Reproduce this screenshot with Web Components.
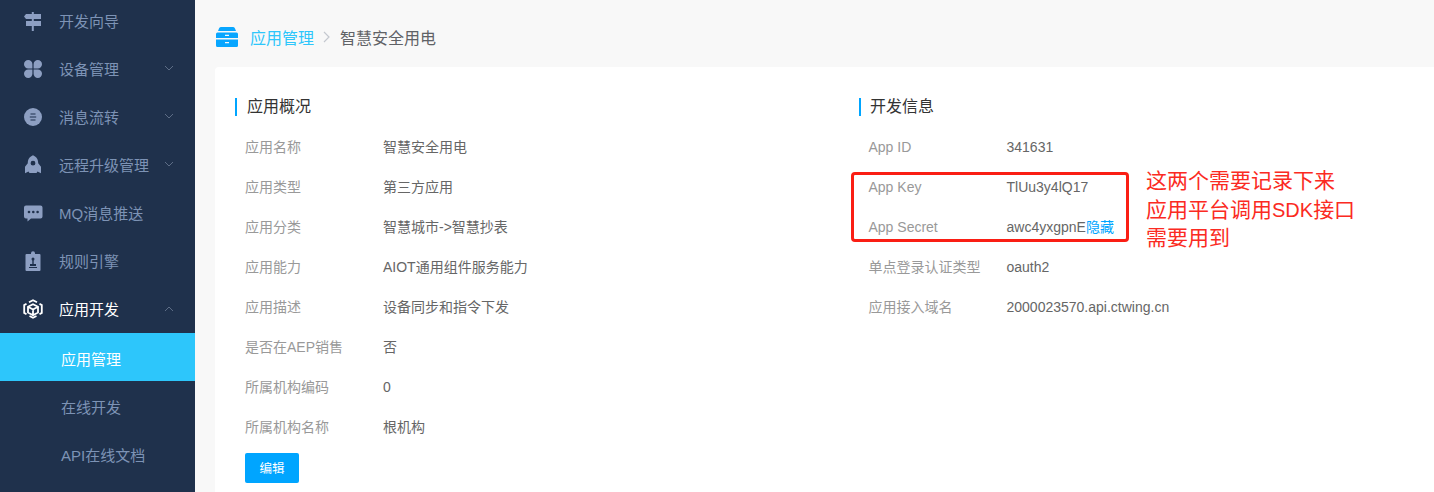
<!DOCTYPE html>
<html lang="zh">
<head>
<meta charset="utf-8">
<title>应用管理</title>
<style>
  html, body { margin: 0; height: 492px; overflow: hidden; }
  body { font-family: "Liberation Sans", "Noto Sans CJK SC", sans-serif; }
</style>
</head>
<body>
<app-shell>
  <side-nav slot="nav">
    <nav-item label="开发向导"><svg slot="icon" viewBox="0 0 20 20"><path d="M8.800 1h2v2h7.200v5h-7.200v2h7.200v5h-7.200v5h-2v-5H3v-5h5.800V8H3L1 5.500 3 3h5.800z" fill="#8d9fc2"/></svg></nav-item>
    <nav-item label="设备管理" chevron="down"><svg slot="icon" viewBox="0 0 20 20" fill="#8d9fc2"><path d="M5.200 1a4.200 4.200 0 0 1 4.200 4.200v4.200H5.200a4.200 4.200 0 0 1 0-8.400zM14.800 1a4.200 4.200 0 0 1 0 8.400h-4.200V5.200A4.200 4.200 0 0 1 14.800 1zM5.200 10.600h4.200v4.200a4.200 4.200 0 1 1-4.200-4.200zM10.600 10.600h4.200a4.200 4.200 0 1 1-4.200 4.200z"/></svg></nav-item>
    <nav-item label="消息流转" chevron="down"><svg slot="icon" viewBox="0 0 20 20"><circle cx="10" cy="10" r="9" fill="#8d9fc2"/><path d="M7.500 7h5M6.800 10h6.400M7.500 13h5" stroke="#1f314c" stroke-width="1.100"/></svg></nav-item>
    <nav-item label="远程升级管理" chevron="down"><svg slot="icon" viewBox="0 0 20 20" fill-rule="evenodd"><path d="M10 .3c3.800 1.600 5.200 4.500 5.200 8l2.800 3.500v6.500l-3.500-1.800-1 1.500H6.500l-1-1.500L2 18.300v-6.500l2.800-3.500c0-3.500 1.400-6.400 5.200-8zM10 5.800a2.400 2.400 0 1 0 0 4.800 2.400 2.400 0 0 0 0-4.800z" fill="#8d9fc2"/></svg></nav-item>
    <nav-item label="MQ消息推送"><svg slot="icon" viewBox="0 0 20 20"><path d="M3 2.500h14.500a2 2 0 0 1 2 2v9a2 2 0 0 1-2 2H8l-3.500 3v-3H3a2 2 0 0 1-2-2v-9a2 2 0 0 1 2-2z" fill="#8d9fc2"/><circle cx="6" cy="9" r="1.300" fill="#1f314c"/><circle cx="10.300" cy="9" r="1.300" fill="#1f314c"/><circle cx="14.600" cy="9" r="1.300" fill="#1f314c"/></svg></nav-item>
    <nav-item label="规则引擎"><svg slot="icon" viewBox="0 0 20 20"><path d="M8 3V2.200a2 2 0 0 1 4 0V3h4.500a1 1 0 0 1 1 1v15a1 1 0 0 1-1 1h-13a1 1 0 0 1-1-1V4a1 1 0 0 1 1-1z" fill="#8d9fc2"/><circle cx="10" cy="8" r="1.500" fill="#1f314c"/><path d="M9.300 9h1.400v4h2.300v2H7v-2h2.300z" fill="#1f314c"/><path d="M6 16.500h8" stroke="#1f314c"/></svg></nav-item>
    <nav-item label="应用开发" chevron="up" active><svg slot="icon" viewBox="0 0 20 20" fill="none" stroke="#fff" stroke-width="1.800"><path d="M10 5.200l5 2.600v5.700L10 16.200l-5-2.700V7.800zM5 7.800l5 2.700 5-2.700M10 10.500v5.700"/><path d="M6 3.300L10 1.200l4 2.100M3.500 4.800L1.200 6.100v7.800l2.300 1.300M16.500 4.800l2.300 1.300v7.800l-2.300 1.300M6.500 17l3.500 1.800 3.500-1.800"/></svg></nav-item>
    <sub-item selected>应用管理</sub-item>
    <sub-item>在线开发</sub-item>
    <sub-item>API在线文档</sub-item>
  </side-nav>

  <bread-crumb link="应用管理" current="智慧安全用电"></bread-crumb>

  <info-card>
    <info-panel heading="应用概况">
      <info-row label="应用名称">智慧安全用电</info-row>
      <info-row label="应用类型">第三方应用</info-row>
      <info-row label="应用分类">智慧城市-&gt;智慧抄表</info-row>
      <info-row label="应用能力">AIOT通用组件服务能力</info-row>
      <info-row label="应用描述">设备同步和指令下发</info-row>
      <info-row label="是否在AEP销售">否</info-row>
      <info-row label="所属机构编码">0</info-row>
      <info-row label="所属机构名称">根机构</info-row>
      <blue-button>编辑</blue-button>
    </info-panel>
    <info-panel heading="开发信息">
      <info-row label="App ID">341631</info-row>
      <info-row label="App Key">TlUu3y4lQ17</info-row>
      <info-row label="App Secret">awc4yxgpnE<link-text>隐藏</link-text></info-row>
      <info-row label="单点登录认证类型">oauth2</info-row>
      <info-row label="应用接入域名">2000023570.api.ctwing.cn</info-row>
    </info-panel>
    <red-note slot="overlay"></red-note>
  </info-card>
</app-shell>

<script>
const define =
  (name, markup, setup) =>
    customElements.define(name, class extends HTMLElement {
      constructor() {
        super();
        this.attachShadow({ mode: 'open' }).innerHTML = markup;
      }

      connectedCallback() {
        if (setup) setup(this, this.shadowRoot);
      }
    });

const setText =
  (root, selector, text) => {
    root.querySelector(selector).textContent = text;
  };

define('app-shell', `
  <style>
    :host { display: flex; width: 1434px; height: 492px; overflow: hidden; background: #f8f8f8; }
    main { flex: 1; min-width: 0; display: flex; flex-direction: column; }
  </style>
  <slot name="nav"></slot>
  <main><slot></slot></main>
`);

define('side-nav', `
  <style>
    :host { display: block; flex: none; width: 195px; height: 492px; background: #1f314c; overflow: hidden; }
    div { margin-top: -3px; }
  </style>
  <div><slot></slot></div>
`);

define('nav-item', `
  <style>
    :host { display: flex; align-items: center; gap: 16px; height: 48px; padding-left: 23px; font-size: 15px; color: #7d93b5; position: relative; }
    :host([active]) { color: #fff; }
    ::slotted(svg) { width: 20px; height: 20px; flex: none; }
    span { margin-bottom: 2px; }
    .chev { position: absolute; left: 164px; top: 19px; width: 10px; height: 8px; fill: none; stroke: #5d6d86; stroke-width: 1; display: none; }
    :host([chevron]) .chev { display: block; }
    :host([chevron="up"]) .chev { transform: scaleY(-1); top: 20px; }
  </style>
  <slot name="icon"></slot><span></span>
  <svg class="chev" viewBox="0 0 10 8"><path d="M1 2l4 4 4-4"/></svg>
`, (el, root) => setText(root, 'span', el.getAttribute('label')));

define('sub-item', `
  <style>
    :host { display: flex; align-items: center; height: 48px; box-sizing: border-box; padding: 2px 0 0 61px; font-size: 15px; color: #7d93b5; }
    :host([selected]) { background: #2dc6fb; color: #fff; }
  </style>
  <slot></slot>
`);

define('bread-crumb', `
  <style>
    :host { display: flex; align-items: center; height: 67px; padding: 7px 0 0 21px; box-sizing: border-box; font-size: 16px; color: #606266; }
    svg { width: 22px; height: 20px; margin-right: 12px; }
    .link { color: #2dc6fb; }
    .sep { width: 7px; height: 12px; margin: 0 10px 0 9px; fill: none; stroke: #c4c8cf; stroke-width: 1.200; }
  </style>
  <svg viewBox="0 0 22 20" fill="#08a6ff">
    <path d="M5 0h12a2 2 0 0 1 2 1.500L20 4H2l1-2.500A2 2 0 0 1 5 0z"/>
    <path fill-rule="evenodd" d="M1.500 5.500h19a1.500 1.500 0 0 1 1.500 1.500v4H0V7a1.500 1.500 0 0 1 1.500-1.500zM9 7.800v1.200h4V7.800z"/>
    <path fill-rule="evenodd" d="M0 12.500h22v6a1.500 1.500 0 0 1-1.500 1.500h-19A1.500 1.500 0 0 1 0 18.500zM9 15v1.200h4V15z"/>
  </svg>
  <span class="link"></span>
  <svg class="sep" viewBox="0 0 7 12"><path d="M1 1l5 5-5 5"/></svg>
  <span class="now"></span>
`, (el, root) => {
  setText(root, '.link', el.getAttribute('link'));
  setText(root, '.now', el.getAttribute('current'));
});

define('info-card', `
  <style>
    :host { display: grid; grid-template-columns: 623.500px 1fr; flex: 1; position: relative; margin-left: 20px; padding: 31px 0 0 20px; background: #fff; border-radius: 4px 0 0 0; }
  </style>
  <slot></slot>
  <slot name="overlay"></slot>
`);

define('info-panel', `
  <style>
    :host { display: block; }
    h2 { margin: 0 0 11px; height: 18px; line-height: 18px; padding-left: 9.500px; border-left: 2px solid #00a5ff; font-size: 16px; font-weight: 400; color: #333; }
    :host(:first-child) h2 { padding-left: 10px; }
  </style>
  <h2></h2>
  <slot></slot>
`, (el, root) => setText(root, 'h2', el.getAttribute('heading')));

define('info-row', `
  <style>
    :host { display: flex; align-items: center; height: 40px; padding-left: 10px; font-size: 14px; line-height: 20px; color: #666; }
    span { width: 138px; flex: none; color: #999; }
  </style>
  <span></span><slot></slot>
`, (el, root) => setText(root, 'span', el.getAttribute('label')));

define('link-text', `
  <style>:host { color: #00a5ff; }</style>
  <slot></slot>
`);

define('blue-button', `
  <style>
    :host { display: flex; align-items: center; justify-content: center; width: 54px; height: 30px; box-sizing: border-box; padding-bottom: 2px; margin: 6px 0 0 10px; background: #00a5ff; border-radius: 2px; color: #fff; font-size: 12.500px; }
  </style>
  <slot></slot>
`);

// the hand-drawn callout sits on top of the card, so this one is placed by coordinates
define('red-note', `
  <style>
    :host { position: absolute; left: 636px; top: 105px; display: block; }
    .box { width: 272px; height: 64px; border: 3px solid #fa1e14; border-radius: 4px; }
    .note { position: absolute; left: 295px; top: -5px; width: 230px; font-size: 21px; line-height: 28.500px; color: #fb2a22; }
    .latin { font-size: 20px; }
  </style>
  <div class="box"></div>
  <div class="note">这两个需要记录下来<br>应用平台调用<span class="latin">SDK</span>接口<br>需要用到</div>
`);
</script>
</body>
</html>
